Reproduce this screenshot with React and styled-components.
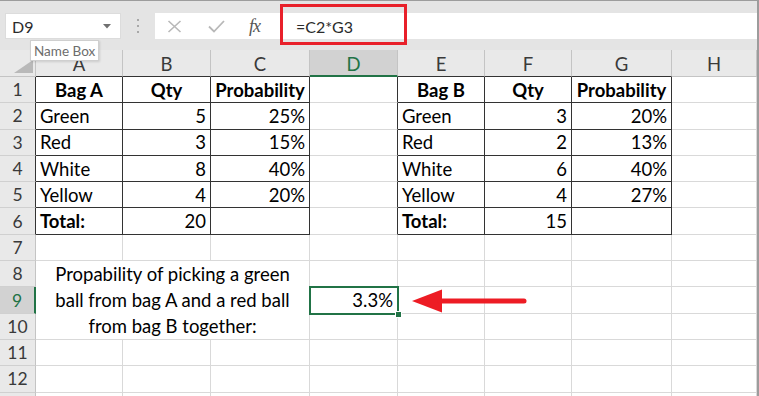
import React from "react";
import styled, { createGlobalStyle, css } from "styled-components";

const GREEN = "#217346";
const GRID = "#d9d9d9";
const INK = "#2b2b2b";
const HEAD_LINE = "#c4c4c4";

const COLS = [36, 87, 88, 99, 88, 87, 87, 100, 85];
const LETTERS = ["A", "B", "C", "D", "E", "F", "G", "H"];

// cell helpers: left text, right number, centered bold header
const L = (v, b) => ({ v, a: "flex-start", b });
const R = (v) => ({ v, a: "flex-end" });
const H = (v) => ({ v, a: "center", b: true });

const DATA = {
  1: [H("Bag A"), H("Qty"), H("Probability"), null, H("Bag B"), H("Qty"), H("Probability"), null],
  2: [L("Green"), R("5"), R("25%"), null, L("Green"), R("3"), R("20%"), null],
  3: [L("Red"), R("3"), R("15%"), null, L("Red"), R("2"), R("13%"), null],
  4: [L("White"), R("8"), R("40%"), null, L("White"), R("6"), R("40%"), null],
  5: [L("Yellow"), R("4"), R("20%"), null, L("Yellow"), R("4"), R("27%"), null],
  6: [L("Total:", true), R("20"), null, null, L("Total:", true), R("15"), null, null],
  9: [null, null, null, R("3.3%"), null, null, null, null],
};

const SEL = { r: 9, c: 4 };
const VISIBLE_ROWS = 12;

const inTable = (r, c) => r >= 1 && r <= 6 && ((c >= 1 && c <= 3) || (c >= 5 && c <= 7));
const inMerge = (r, c) => r >= 8 && r <= 10 && c >= 1 && c <= 3;

const Global = createGlobalStyle`
  html, body { margin: 0; padding: 0; background: #fff; }
  body { font-family: "Lato", "Liberation Sans", sans-serif; }
`;

const Window = styled.div`
  position: relative;
  width: 759px;
  height: 396px;
  box-sizing: border-box;
  border-top: 1px solid #9c9c9c;
  border-right: 2px solid #9c9c9c;
  display: flex;
  flex-direction: column;
  overflow: hidden;
  background: #fff;
`;

const FormulaBar = styled.div`
  flex: 0 0 49px;
  box-sizing: border-box;
  background: #e4e4e4;
  display: flex;
  align-items: flex-start;
  padding-top: 12px;
  padding-left: 5px;
`;

const NameBox = styled.div`
  width: 116px;
  height: 26px;
  box-sizing: border-box;
  background: #fff;
  border: 1px solid #dcdcdc;
  display: flex;
  align-items: center;
  justify-content: space-between;
  padding: 0 9px 0 6px;
  font-size: 16px;
  color: ${INK};
`;

const Grip = styled.div`
  width: 34px;
  height: 26px;
  display: flex;
  align-items: center;
  justify-content: center;
`;

const FormulaBox = styled.div`
  flex: 1;
  height: 26px;
  box-sizing: border-box;
  background: #fff;
  display: flex;
  align-items: center;
  padding-left: 12px;
`;

const Tool = styled.span`
  width: ${(p) => p.$w}px;
  display: flex;
  align-items: center;
  justify-content: flex-start;
`;

const Fx = styled.span`
  font-family: "Liberation Serif", serif;
  font-style: italic;
  font-size: 18px;
  color: #555;
  letter-spacing: -1px;
  width: 47px;
`;

const FormulaText = styled.span`
  font-size: 16px;
  color: ${INK};
`;

const Sheet = styled.div`
  flex: 1;
  display: grid;
  grid-template-columns: ${COLS.map((w) => w + "px").join(" ")};
  grid-template-rows: 27px repeat(${VISIBLE_ROWS + 1}, 26.3px);
  overflow: hidden;
  font-size: 18.5px;
`;

const headBase = css`
  box-sizing: border-box;
  background: ${(p) => (p.$sel ? "#d2d2d2" : "#e9e9e9")};
  color: ${(p) => (p.$sel ? GREEN : "#3a3a3a")};
  display: flex;
  align-items: center;
  justify-content: center;
`;

const Corner = styled.div`
  ${headBase}
  border-right: 1px solid ${HEAD_LINE};
  border-bottom: 1px solid ${HEAD_LINE};
  align-items: flex-end;
  justify-content: flex-end;
  padding: 0 2px 3px 0;
`;

const ColHead = styled.div`
  ${headBase}
  border-right: 1px solid ${HEAD_LINE};
  border-bottom: ${(p) =>
    p.$sel ? `2px solid ${GREEN}` : `1px solid ${p.$black ? "#333" : HEAD_LINE}`};
  padding-top: 2px;
`;

const RowHead = styled.div`
  ${headBase}
  font-size: 17.5px;
  border-bottom: 1px solid #d0d0d0;
  border-right: ${(p) =>
    p.$sel ? `2px solid ${GREEN}` : `1px solid ${p.$black ? "#333" : HEAD_LINE}`};
`;

const Cell = styled.div`
  position: relative;
  box-sizing: border-box;
  min-width: 0;
  display: flex;
  align-items: center;
  justify-content: ${(p) => p.$align || "flex-start"};
  padding: 0 4px 0 4px;
  white-space: nowrap;
  color: #000;
  font-weight: ${(p) => (p.$bold ? 700 : 400)};
  border-right: 1px solid ${(p) => (p.$br ? "#333" : GRID)};
  border-bottom: 1px solid ${(p) => (p.$bb ? "#333" : GRID)};

  ${(p) =>
    p.$sel &&
    css`
      z-index: 2;
      &::after {
        content: "";
        position: absolute;
        left: -1px;
        top: -1px;
        right: -2px;
        bottom: -2px;
        border: 2px solid ${GREEN};
      }
      &::before {
        content: "";
        position: absolute;
        right: -5px;
        bottom: -5px;
        width: 5px;
        height: 5px;
        background: ${GREEN};
        border: 1px solid #fff;
        z-index: 1;
      }
    `}
`;

const Merged = styled.div`
  grid-column: span 3;
  grid-row: span 3;
  box-sizing: border-box;
  border-right: 1px solid ${GRID};
  border-bottom: 1px solid ${GRID};
  display: flex;
  flex-direction: column;
  align-items: center;
  justify-content: center;
  line-height: 26.3px;
  color: #000;
  white-space: nowrap;
`;

const Tooltip = styled.div`
  position: absolute;
  left: 30px;
  top: 39px;
  height: 21px;
  box-sizing: border-box;
  padding: 0 3px;
  display: flex;
  align-items: center;
  background: #fff;
  border: 1px solid #cfcfcf;
  box-shadow: 1px 1px 2px rgba(0, 0, 0, 0.12);
  font-size: 13.5px;
  color: #6d6d6d;
  z-index: 5;
`;

const Highlight = styled.div`
  position: absolute;
  left: 280px;
  top: 3px;
  width: 127px;
  height: 41px;
  box-sizing: border-box;
  border: 3px solid #e8202a;
  z-index: 5;
`;

const Arrow = styled.svg`
  position: absolute;
  left: 405px;
  top: 285px;
  z-index: 5;
`;

const Caret = () => (
  <svg width="8" height="5" viewBox="0 0 8 5">
    <path d="M0 0h8L4 4.5z" fill="#707070" />
  </svg>
);

const Dots = () => (
  <svg width="4" height="14" viewBox="0 0 4 14">
    <rect x="1" y="0" width="2" height="2" fill="#a8a8a8" />
    <rect x="1" y="6" width="2" height="2" fill="#a8a8a8" />
    <rect x="1" y="12" width="2" height="2" fill="#a8a8a8" />
  </svg>
);

const Cross = () => (
  <svg width="15" height="13" viewBox="0 0 15 13">
    <path d="M1.5 1l12 11M13.5 1l-12 11" stroke="#b8b8b8" strokeWidth="1.6" />
  </svg>
);

const Check = () => (
  <svg width="17" height="13" viewBox="0 0 17 13">
    <path d="M1 6.5l5 5L16 1" stroke="#b8b8b8" strokeWidth="1.8" fill="none" />
  </svg>
);

const SelectAll = () => (
  <svg width="19" height="13" viewBox="0 0 19 13">
    <path d="M0 13L19 0v13z" fill="#b9b9b9" />
  </svg>
);

function renderSheet() {
  const out = [];
  out.push(
    <Corner key="corner">
      <SelectAll />
    </Corner>
  );
  LETTERS.forEach((l, i) => {
    const c = i + 1;
    out.push(
      <ColHead key={"h" + l} $sel={c === SEL.c} $black={inTable(1, c)}>
        {l}
      </ColHead>
    );
  });
  // one extra row below, only its top edge is in view
  for (let r = 1; r <= VISIBLE_ROWS + 1; r++) {
    out.push(
      <RowHead key={"r" + r} $sel={r === SEL.r} $black={inTable(r, 1)}>
        {r <= VISIBLE_ROWS ? r : ""}
      </RowHead>
    );
    for (let c = 1; c <= 8; c++) {
      if (inMerge(r, c)) {
        if (r === 8 && c === 1) {
          out.push(
            <Merged key="merged">
              <span>Propability of picking a green</span>
              <span>ball from bag A and a red ball</span>
              <span>from bag B together:</span>
            </Merged>
          );
        }
        continue;
      }
      const d = (DATA[r] || [])[c - 1];
      out.push(
        <Cell
          key={r + "-" + c}
          $align={d && d.a}
          $bold={d && d.b}
          $br={inTable(r, c) || inTable(r, c + 1)}
          $bb={inTable(r, c) || inTable(r + 1, c)}
          $sel={r === SEL.r && c === SEL.c}
        >
          {d ? d.v : ""}
        </Cell>
      );
    }
  }
  return out;
}

export default function App() {
  return (
    <>
      <Global />
      <Window>
        <FormulaBar>
          <NameBox>
            <span>D9</span>
            <Caret />
          </NameBox>
          <Grip>
            <Dots />
          </Grip>
          <FormulaBox>
            <Tool $w={41}>
              <Cross />
            </Tool>
            <Tool $w={41}>
              <Check />
            </Tool>
            <Fx>fx</Fx>
            <FormulaText>=C2*G3</FormulaText>
          </FormulaBox>
        </FormulaBar>
        <Sheet>{renderSheet()}</Sheet>
        <Tooltip>Name Box</Tooltip>
        <Highlight />
        <Arrow width="125" height="30" viewBox="0 0 125 30">
          <path d="M7 15L37 3.5v23z" fill="#ed1c24" />
          <path d="M35 15H119" stroke="#ed1c24" strokeWidth="5" strokeLinecap="round" />
        </Arrow>
      </Window>
    </>
  );
}
